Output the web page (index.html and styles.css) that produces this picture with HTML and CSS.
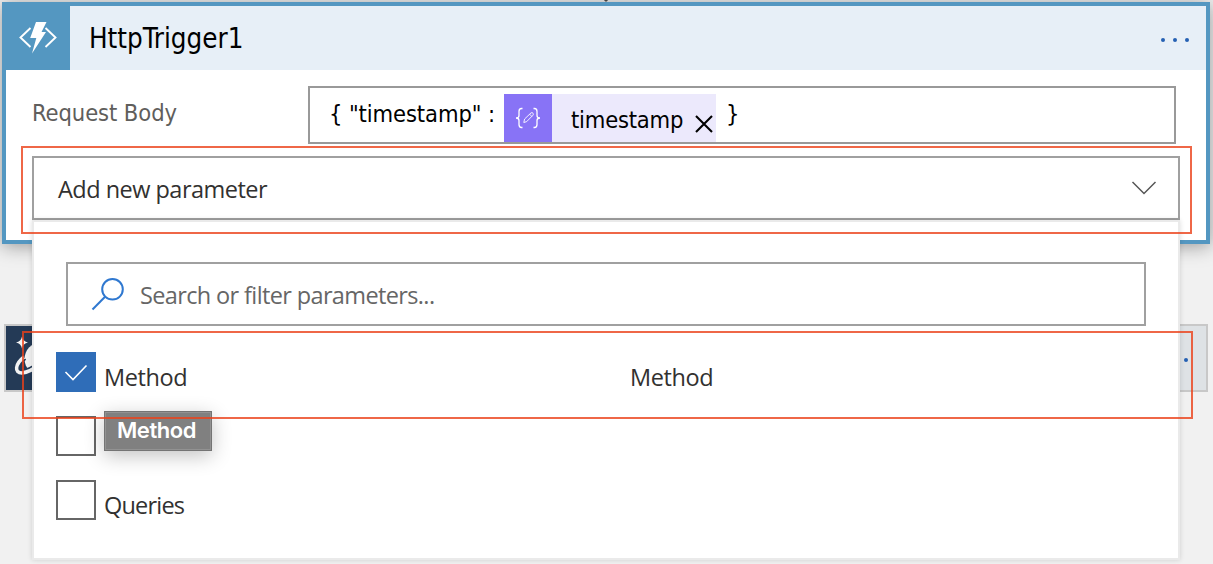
FILE: index.html
```html
<!DOCTYPE html>
<html lang="en">
<head>
<meta charset="utf-8">
<title>HttpTrigger1</title>
<link rel="stylesheet" href="styles.css">
</head>
<body>
<main class="canvas">
  <svg class="connector" viewBox="0 0 8 2"><path d="M2 0h4L4.800 1.500H3.200z" fill="#444"/></svg>
  <section class="next-step">
    <svg class="cosmos-icon" viewBox="0 0 64 64">
      <path d="M16 10.500q1 5 6 6q-5 1-6 6q-1-5-6-6q5-1 6-6z" fill="#f4f4f4"/>
      <circle cx="35" cy="33" r="16.500" fill="#f2f2f2"/>
      <path d="M18 31C9 38 8 47 16 47Q24 46 33 39" fill="none" stroke="#243a56" stroke-width="7"/>
      <path d="M18 31C9 38 8 47 16 47Q24 46 33 39" fill="none" stroke="#f2f2f2" stroke-width="3.500"/>
    </svg>
    <span class="next-dot"></span>
  </section>

  <section class="card">
    <header class="card-header">
      <div class="card-icon">
        <svg width="64" height="64" viewBox="0 0 64 64">
          <path d="M24.500 22L14.500 31.500L24.500 41M39.500 22L49.500 31.500L39.500 41" fill="none" stroke="#fff" stroke-width="1.900"/>
          <path d="M30 16H40.500L35.500 26H40L26 47.500L30.300 32H24.200z" fill="#fff"/>
        </svg>
      </div>
      <h1 class="card-title"><span>HttpTrigger1</span></h1>
      <div class="dots"><i></i><i></i><i></i></div>
    </header>
    <div class="field">
      <label class="field-label"><span>Request Body</span></label>
      <div class="field-input">
        <span class="code-start">{ "timestamp" :</span>
        <div class="token">
          <div class="token-icon">
            <svg width="48" height="48" viewBox="0 0 48 48" fill="none" stroke="#fff" stroke-width="1.300">
              <path d="M18.500 14.500h-1q-2.500 0-2.500 3v4q0 2.500-3 2.500q3 0 3 2.500v4q0 3 2.500 3h1M29.500 14.500h1q2.500 0 2.500 3v4q0 2.500 3 2.500q-3 0-3 2.500v4q0 3-2.500 3h-1"/>
              <path d="M19.800 28.500l.8-3.500l6.500-6.200q1.200-.5 1.900.4t0 2l-6.300 6.400zM25.700 20.200l2.100 2.200" stroke-width=".9"/>
            </svg>
          </div>
          <span class="token-text">timestamp</span>
          <svg class="token-close" width="18" height="18" viewBox="0 0 18 18"><path d="M1 1L17 17M17 1L1 17" stroke="#000" stroke-width="2.100"/></svg>
        </div>
        <span class="code-end">}</span>
      </div>
    </div>
    <div class="combo">
      <span class="combo-text">Add new parameter</span>
      <svg width="26" height="16" viewBox="0 0 26 16"><path d="M1.500 2L13 13.500L24.500 2" fill="none" stroke="#555" stroke-width="1.500"/></svg>
    </div>
  </section>

  <section class="menu">
    <div class="search">
      <svg width="34" height="34" viewBox="0 0 34 34" fill="none" stroke="#2f78d0" stroke-width="2"><circle cx="21.500" cy="12.300" r="10.300"/><path d="M14.300 19.500L1.500 32.500"/></svg>
      <span class="search-text">Search or filter parameters...</span>
    </div>
    <div class="options">
      <div class="option">
        <span class="check checked"><svg width="40" height="40" viewBox="0 0 40 40"><path d="M9.500 20L17 27.500L30.500 13.500" fill="none" stroke="#fff" stroke-width="1.600"/></svg></span>
        <span class="option-text method">Method</span>
        <span class="option-text method">Method</span>
      </div>
      <div class="option"><span class="check"></span></div>
      <div class="option"><span class="check"></span><span class="option-text queries">Queries</span></div>
    </div>
  </section>

  <div class="tooltip"><span>Method</span></div>
  <div class="highlight highlight-combo"></div>
  <div class="highlight highlight-option"></div>
</main>
</body>
</html>
```

FILE: styles.css
```css
* { box-sizing: border-box; }
body { margin: 0; font-family: "Open Sans", "Noto Sans", sans-serif; }
svg { display: block; flex: none; }
span { white-space: nowrap; }

.canvas {
  position: relative;
  width: 1213px;
  height: 564px;
  overflow: hidden;
  background: #f1f1f1;
}
.connector { position: absolute; left: 602px; top: 0; width: 8px; height: 2px; z-index: 2; }

.card {
  position: absolute;
  left: 2px;
  top: 2px;
  width: 1208px;
  height: 242px;
  border: 4px solid #5497c1;
  background: #fff;
  box-shadow: 0 2px 18px rgba(0, 0, 0, .38);
}
.card-header { display: flex; align-items: center; height: 64px; background: #e7eff7; }
.card-icon { width: 64px; height: 64px; background: #5497c1; }
.card-title {
  flex: 1;
  margin: 0;
  padding-left: 19px;
  font: 400 27.500px/38px "DejaVu Sans Condensed", "DejaVu Sans", sans-serif;
  font-stretch: condensed;
  letter-spacing: 0;
  color: #000;
}
.dots { display: flex; gap: 8px; padding: 4px 17.500px 0 0; }
.dots i, .next-dot { width: 4px; height: 4px; border-radius: 2px; background: #2460b3; }

.field {
  display: flex;
  height: 74px;
  padding: 16px 30px 0 26px;
}
.field-label {
  width: 276px;
  padding-top: 11px;
  font: 23.500px/32px "DejaVu Sans Condensed", "DejaVu Sans", sans-serif;
  font-stretch: condensed;
  letter-spacing: -.08px;
  color: #605e5c;
}
.field-input {
  flex: 1;
  display: flex;
  height: 58px;
  padding: 6px 0 0 19px;
  border: 2px solid #999;
  font: 23.500px/32px "DejaVu Sans Condensed", "DejaVu Sans", sans-serif;
  font-stretch: condensed;
  color: #000;
}
.code-start { width: 175px; padding-top: 4px; letter-spacing: -.1px; }
.token { display: flex; width: 212px; height: 48px; background: #ece9fc; }
.token-icon { width: 48px; height: 48px; background: #8873f6; }
.token-text { width: 124px; padding: 10px 0 0 19px; letter-spacing: -.2px; }
.token-close { margin: 21px 0 0 19px; }
.code-end { padding: 4px 0 0 10px; }

.combo {
  display: flex;
  align-items: center;
  justify-content: space-between;
  width: 1148px;
  height: 64px;
  margin: 12px 0 0 26px;
  padding: 0 21px 0 24px;
  border: 2px solid #a0a0a0;
  font-size: 23.500px;
  line-height: 32px;
  color: #323130;
}
.combo-text { padding-top: 2px; letter-spacing: -.52px; }

.next-step {
  position: absolute;
  left: 4px;
  top: 324px;
  width: 1204px;
  height: 68px;
  display: flex;
  align-items: center;
  justify-content: space-between;
  padding-right: 18px;
  border: 2px solid #c8c8c8;
  background: #dee2e5;
}
.cosmos-icon { width: 64px; height: 64px; background: #243a56; }
.next-dot { margin-top: 4px; }

.menu {
  position: absolute;
  left: 32px;
  top: 220px;
  width: 1148px;
  height: 340px;
  padding: 40px 32px 0;
  border: 2px solid #eaeaea;
  background: #fff;
  background-clip: padding-box;
  box-shadow: 0 0 5px rgba(0, 0, 0, .14);
  font-size: 23.500px;
  line-height: 32px;
  color: #323130;
}
.search {
  display: flex;
  align-items: center;
  gap: 15px;
  height: 64px;
  padding-left: 23px;
  border: 2px solid #a0a0a0;
  color: #666;
}
.search-text { padding-top: 2px; letter-spacing: -.63px; }
.options { display: grid; gap: 24px; margin: 26px 0 0 -10px; }
.option { display: grid; grid-template-columns: 48px 526px 1fr; height: 40px; }
.check { width: 40px; height: 40px; border: 2px solid #666; background: #fff; }
.checked { border: 0; background: #2f6db8; }
.option-text { padding-top: 9px; }
.method { letter-spacing: -.4px; }
.queries { letter-spacing: -.8px; }

.tooltip {
  position: absolute;
  left: 104px;
  top: 411px;
  width: 108px;
  height: 40px;
  padding-left: 12px;
  border: 1px solid #747474;
  background: #808080;
  box-shadow: inset 0 0 0 1px #929292, 0 5px 20px rgba(0, 0, 0, .24);
  font: 600 22px/37px Inter, sans-serif;
  letter-spacing: -.45px;
  color: #fff;
}

.highlight { position: absolute; border: 2px solid rgba(235, 65, 25, .8); }
.highlight-combo { left: 21px; top: 146px; width: 1171px; height: 88px; }
.highlight-option { left: 22px; top: 331px; width: 1171px; height: 88px; }
```
